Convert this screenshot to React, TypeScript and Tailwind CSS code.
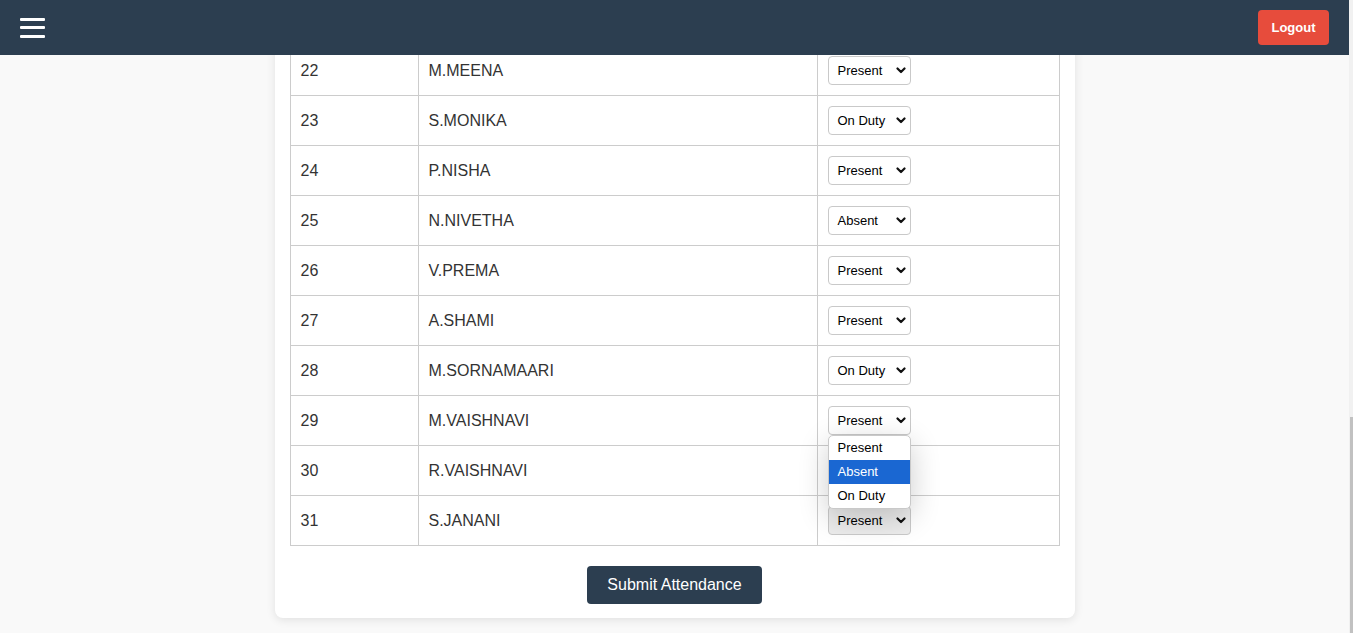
import React from "react";

const rows: { n: number; name: string; status: string }[] = [
  { n: 22, name: "M.MEENA", status: "Present" },
  { n: 23, name: "S.MONIKA", status: "On Duty" },
  { n: 24, name: "P.NISHA", status: "Present" },
  { n: 25, name: "N.NIVETHA", status: "Absent" },
  { n: 26, name: "V.PREMA", status: "Present" },
  { n: 27, name: "A.SHAMI", status: "Present" },
  { n: 28, name: "M.SORNAMAARI", status: "On Duty" },
  { n: 29, name: "M.VAISHNAVI", status: "Present" },
  { n: 30, name: "R.VAISHNAVI", status: "Absent" },
  { n: 31, name: "S.JANANI", status: "Present" },
];

function Chevron() {
  return (
    <svg width="10" height="7" viewBox="0 0 10 7" className="shrink-0">
      <path d="M1.5 1.5 L5 5 L8.5 1.5" fill="none" stroke="#111" strokeWidth="2.2" strokeLinecap="round" strokeLinejoin="round" />
    </svg>
  );
}

function FakeSelect({ value, dim, open }: { value: string; dim?: boolean; open?: boolean }) {
  return (
    <div className="relative inline-block">
      <div
        className={`flex items-center justify-between w-[83px] h-[29px] pl-[9px] pr-[4px] border border-[#c9c9c9] rounded-[4px] text-[13px] text-black ${dim ? "bg-[#ececec]" : "bg-white"}`}
      >
        <span>{value}</span>
        <Chevron />
      </div>
      {open && (
        <div className="absolute left-0 top-[29px] z-20 w-[83px] bg-white border border-[#c9c9c9] rounded-[5px] shadow-[0_8px_30px_rgba(0,0,0,0.2)] overflow-hidden text-[13px] text-black">
          <div className="h-[24px] flex items-center pl-[9px]">Present</div>
          <div className="h-[24px] flex items-center pl-[9px] bg-[#1a67d2] text-white">Absent</div>
          <div className="h-[24px] flex items-center pl-[9px]">On Duty</div>
        </div>
      )}
    </div>
  );
}

export default function App() {
  return (
    <div
      className="flex h-[633px] w-full overflow-hidden bg-[#f9f9f9]"
      style={{ fontFamily: '"Liberation Sans", Arial, sans-serif' }}
    >
      <div className="flex-1 flex flex-col min-w-0">
        <header className="relative z-10 h-[55px] shrink-0 bg-[#2c3e50] flex items-center justify-between pl-[20px] pr-[20px]">
          <div className="flex flex-col gap-[5.5px] w-[25px]">
            <div className="h-[3px] bg-white rounded-[1px]" />
            <div className="h-[3px] bg-white rounded-[1px]" />
            <div className="h-[3px] bg-white rounded-[1px]" />
          </div>
          <button className="h-[35px] w-[71px] bg-[#e74c3c] text-white text-[13px] font-bold rounded-[4px]">
            Logout
          </button>
        </header>
        <div className="-mt-[9px] flex justify-center">
          <div className="w-[800px] bg-white rounded-b-[8px] shadow-[0_2px_10px_rgba(0,0,0,0.1)] px-[15px] pb-[14px] flex flex-col items-center">
            <div className="w-[770px] border-l border-r border-[#cccccc]">
              {rows.map((r) => (
                <div
                  key={r.n}
                  className="grid grid-cols-[128px_399px_241px] h-[50px] border-b border-[#cccccc] text-[16px] text-[#333]"
                >
                  <div className="flex items-center pl-[10px] border-r border-[#cccccc]">{r.n}</div>
                  <div className="flex items-center pl-[10px] border-r border-[#cccccc]">{r.name}</div>
                  <div className="flex items-center pl-[10px]">
                    <FakeSelect value={r.status} open={r.n === 29} dim={r.n === 31} />
                  </div>
                </div>
              ))}
            </div>
            <button className="mt-[20px] w-[175px] h-[38px] bg-[#2c3e50] text-white text-[16px] rounded-[4px]">
              Submit Attendance
            </button>
          </div>
        </div>
      </div>
      <div className="w-[4px] shrink-0 bg-[#f1f1f1] flex flex-col">
        <div className="h-[417px]" />
        <div className="flex-1 bg-[#c1c1c1] ml-[1px]" />
      </div>
    </div>
  );
}
